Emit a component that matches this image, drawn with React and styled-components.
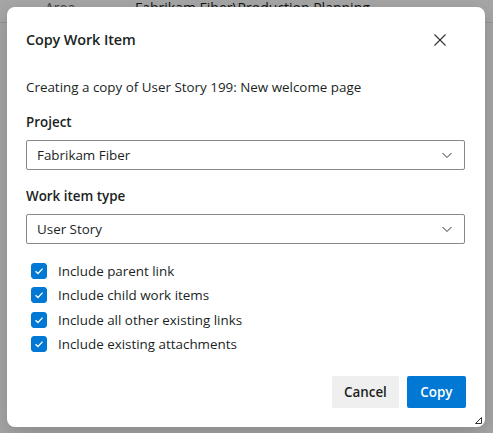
import React, { useState } from 'react';
import styled, { createGlobalStyle } from 'styled-components';

const GlobalStyle = createGlobalStyle`
  html, body {
    margin: 0;
    padding: 0;
    height: 100%;
    overflow: hidden;
  }
  body {
    font-family: "Segoe UI", "Open Sans", "Noto Sans", sans-serif;
    color: #201f1e;
    background: #ffffff;
  }
`;

// Work item form sitting behind the dialog
const Page = styled.div`
  position: fixed;
  inset: 0;
  background: #ffffff;
`;

const FieldRow = styled.div`
  display: grid;
  grid-template-columns: 135px 1fr;
  margin-top: -8px;
  height: 30px;
  align-items: center;
  border-bottom: 1px solid #e6e6e6;
  font-size: 14px;
`;

const FieldLabel = styled.span`
  padding-left: 45px;
  color: #605e5c;
`;

const FieldValue = styled.span`
  color: #201f1e;
`;

const Backdrop = styled.div`
  position: fixed;
  inset: 0;
  background: rgba(0, 0, 0, 0.35);
  display: flex;
  padding: 7px 8px 6px 7px;
  box-sizing: border-box;
`;

const Dialog = styled.div`
  position: relative;
  flex: 1;
  background: #ffffff;
  border-radius: 8px;
  box-shadow: 0 6px 20px rgba(0, 0, 0, 0.18);
  padding: 18px 20px 19px 19px;
  display: flex;
  flex-direction: column;
  box-sizing: border-box;
`;

const Header = styled.div`
  display: flex;
  align-items: center;
  justify-content: space-between;
  height: 28px;
`;

const Title = styled.h2`
  margin: 0;
  font-size: 14.4px;
  font-weight: 600;
  letter-spacing: -0.1px;
`;

const CloseButton = styled.button`
  border: none;
  background: none;
  padding: 0;
  width: 28px;
  height: 28px;
  margin: 2px 11px 0 0;
  display: flex;
  align-items: center;
  justify-content: center;
  cursor: pointer;
  color: #323130;
`;

const Intro = styled.p`
  margin: 24px 0 0;
  font-size: 13.4px;
  line-height: 20px;
`;

const Label = styled.label`
  display: block;
  margin: ${(p) => p.$top}px 0 8px;
  font-size: 13.4px;
  font-weight: 600;
  line-height: 20px;
`;

const SelectBox = styled.div`
  height: 30px;
  border: 1px solid #8a8886;
  border-radius: 2px;
  display: flex;
  align-items: center;
  justify-content: space-between;
  padding: 0 11px 0 10px;
  font-size: 13.4px;
  box-sizing: border-box;
  cursor: pointer;
`;

const Options = styled.div`
  margin-top: 17px;
  padding-left: 5px;
  display: flex;
  flex-direction: column;
  gap: 4.3px;
`;

const OptionRow = styled.label`
  display: flex;
  align-items: center;
  gap: 11px;
  height: 20px;
  font-size: 13.4px;
  cursor: pointer;
`;

const Box = styled.span`
  width: 16px;
  height: 16px;
  border-radius: 3px;
  background: ${(p) => (p.$checked ? '#0078d4' : '#ffffff')};
  border: 1px solid ${(p) => (p.$checked ? '#0078d4' : '#605e5c')};
  box-sizing: border-box;
  display: flex;
  align-items: center;
  justify-content: center;
`;

const Footer = styled.div`
  margin: auto -1px 0 0;
  display: flex;
  justify-content: flex-end;
  gap: 8px;
`;

const Button = styled.button`
  height: 32px;
  padding: 0 ${(p) => (p.$primary ? 13.5 : 12)}px;
  border: none;
  border-radius: 2px;
  font-family: inherit;
  font-size: 13.4px;
  font-weight: 600;
  background: ${(p) => (p.$primary ? '#0078d4' : '#efefef')};
  color: ${(p) => (p.$primary ? '#ffffff' : '#201f1e')};
  cursor: pointer;
`;

const Grip = styled.svg`
  position: absolute;
  right: 3px;
  bottom: 3px;
`;

const Chevron = () => (
  <svg width="12" height="12" viewBox="0 0 12 12" fill="none">
    <path d="M1.5 4L6 8.5L10.5 4" stroke="#323130" strokeWidth="1" />
  </svg>
);

const options = [
  'Include parent link',
  'Include child work items',
  'Include all other existing links',
  'Include existing attachments',
];

const App = () => {
  const [checked, setChecked] = useState(options.map(() => true));

  const toggle = (i) =>
    setChecked((prev) => prev.map((v, j) => (j === i ? !v : v)));

  return (
    <>
      <GlobalStyle />
      <Page>
        <FieldRow>
          <FieldLabel>Area</FieldLabel>
          <FieldValue>Fabrikam Fiber\Production Planning</FieldValue>
        </FieldRow>
      </Page>
      <Backdrop>
        <Dialog>
          <Header>
            <Title>Copy Work Item</Title>
            <CloseButton aria-label="Close">
              <svg width="12" height="12" viewBox="0 0 12 12">
                <path d="M0.5 0.5L11.5 11.5M11.5 0.5L0.5 11.5" stroke="#323130" strokeWidth="1.1" />
              </svg>
            </CloseButton>
          </Header>
          <Intro>Creating a copy of User Story 199: New welcome page</Intro>

          <Label $top={15}>Project</Label>
          <SelectBox>
            <span>Fabrikam Fiber</span>
            <Chevron />
          </SelectBox>

          <Label $top={16}>Work item type</Label>
          <SelectBox>
            <span>User Story</span>
            <Chevron />
          </SelectBox>

          <Options>
            {options.map((text, i) => (
              <OptionRow key={text} onClick={() => toggle(i)}>
                <Box $checked={checked[i]}>
                  {checked[i] && (
                    <svg width="10" height="10" viewBox="0 0 10 10" fill="none">
                      <path d="M1.5 5.2L4 7.5L8.6 2.6" stroke="#ffffff" strokeWidth="1.3" />
                    </svg>
                  )}
                </Box>
                {text}
              </OptionRow>
            ))}
          </Options>

          <Footer>
            <Button>Cancel</Button>
            <Button $primary>Copy</Button>
          </Footer>

          <Grip width="7" height="7" viewBox="0 0 7 7">
            <path d="M6.5 0.5V6.5H0.5Z" fill="none" stroke="#323130" strokeWidth="1" />
          </Grip>
        </Dialog>
      </Backdrop>
    </>
  );
};

export default App;
